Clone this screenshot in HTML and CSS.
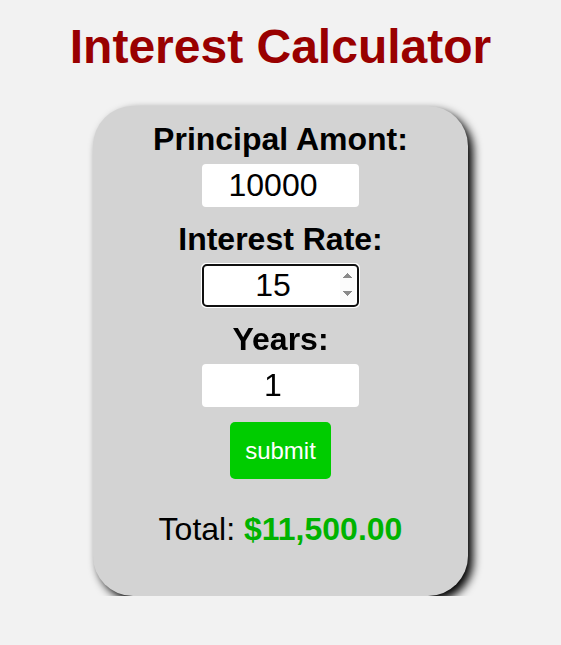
FILE: index.html
```html
<!DOCTYPE html>
<html lang="en">
<head>
<meta charset="utf-8">
<title>Interest Calculator</title>
<link rel="stylesheet" href="styles.css">
</head>
<body>
<h1 class="title">Interest Calculator</h1>
<form class="card" onsubmit="return false;">
  <label class="field-label" for="principal">Principal Amont:</label>
  <input id="principal" class="field" type="number" value="10000">
  <label class="field-label" for="rate">Interest Rate:</label>
  <input id="rate" class="field" type="number" value="15" autofocus>
  <label class="field-label" for="years">Years:</label>
  <input id="years" class="field" type="number" value="1">
  <button class="submit" type="submit">submit</button>
  <p class="total">Total: <span class="amount">$11,500.00</span></p>
</form>
</body>
</html>
```

FILE: styles.css
```css
html, body {
  margin: 0;
  padding: 0;
}
body {
  background: #f2f2f2;
  font-family: "Liberation Sans", Arial, sans-serif;
  color: #000;
}
.title {
  margin: 19px 0 32px;
  font-size: 48px;
  line-height: 55px;
  font-weight: bold;
  color: #990000;
  text-align: center;
}
.card {
  box-sizing: border-box;
  width: 375px;
  height: 490px;
  margin: 0 auto;
  padding: 15px 0 16px;
  background: #d3d3d3;
  border-radius: 40px;
  box-shadow: 5px 5px 10px #000;
  display: flex;
  flex-direction: column;
  align-items: center;
}
.field-label {
  font-size: 32px;
  line-height: 37px;
  font-weight: bold;
  margin-bottom: 6px;
}
.field {
  box-sizing: border-box;
  width: 157px;
  height: 43px;
  padding: 1px 2px;
  border: 2px solid #fff;
  border-radius: 4px;
  background: #fff;
  font-family: "Liberation Sans", Arial, sans-serif;
  font-size: 32px;
  text-align: center;
  color: #000;
  margin: 0 0 14px;
}
.submit {
  margin-top: 1px;
  padding: 15px;
  border: none;
  border-radius: 5px;
  background: #00cc00;
  color: #fff;
  font-family: "Liberation Sans", Arial, sans-serif;
  font-size: 24px;
  line-height: 27px;
}
.total {
  margin: 32px 0 0;
  font-size: 32px;
  line-height: 37px;
}
.amount {
  font-weight: bold;
  color: #00b300;
}
```
